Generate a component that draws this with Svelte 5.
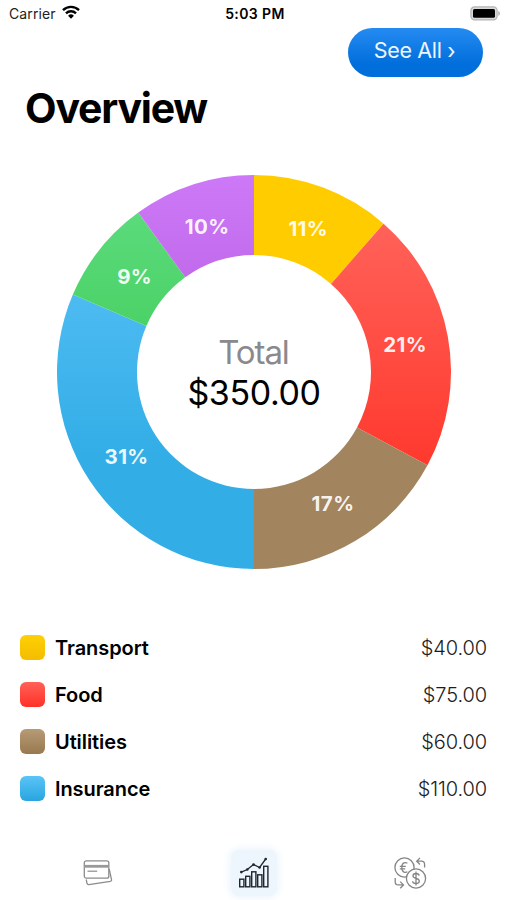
<script>
	const categories = [
		{ name: "Transport", amount: 40, from: "#ffcc00", to: "#ffcc00", top: "#ffd005", bottom: "#f3bd00" },
		{ name: "Food", amount: 75, from: "#ff6259", to: "#ff392e", top: "#ff6259", bottom: "#ff3126" },
		{ name: "Utilities", amount: 60, from: "#a2845e", to: "#a2845e", top: "#b79b77", bottom: "#98794f" },
		{ name: "Insurance", amount: 110, from: "#4dbbf2", to: "#32ade6", top: "#5ac4f7", bottom: "#29a5df" },
		{ name: "Health", amount: 30, from: "#5bdb7c", to: "#4bd267" },
		{ name: "Other", amount: 35, from: "#cd79f7", to: "#c16bec" },
	];

	const outer = 197;
	const inner = 117;
	const labelRadius = 153.2;
	const total = categories.reduce((sum, c) => sum + c.amount, 0);

	function point(radius, share) {
		const angle = share * Math.PI * 2;
		return [radius * Math.sin(angle), -radius * Math.cos(angle)];
	}

	function buildSlices(data) {
		let used = 0;
		return data.map((category) => {
			const start = used / total;
			used += category.amount;
			const end = used / total;
			const [labelX, labelY] = point(labelRadius, (start + end) / 2);
			return {
				...category,
				path: `M${point(outer, start)} A${outer},${outer} 0 0 1 ${point(outer, end)} L${point(inner, end)} A${inner},${inner} 0 0 0 ${point(inner, start)} Z`,
				percent: Math.round((category.amount / total) * 100),
				labelX,
				labelY,
			};
		});
	}

	const slices = buildSlices(categories);
	const legend = categories.slice(0, 4);
</script>

<div class="screen">
	<div class="status">
		<div class="carrier">
			<span>Carrier</span>
			<svg width="18" height="14" viewBox="0 0 18 14">
				<g fill="none" stroke="#000" stroke-width="2.4">
					<path d="M1 5.1a11.5 11.5 0 0 1 16 0" />
					<path d="M4 8.3a7.2 7.2 0 0 1 10 0" />
				</g>
				<path d="M9 13.8 6.1 10.8a4.1 4.1 0 0 1 5.8 0z" />
			</svg>
		</div>
		<span class="time">5:03 PM</span>
		<svg class="battery" width="31" height="15" viewBox="0 0 31 15">
			<rect x=".9" y=".9" width="26.2" height="13" rx="3.6" fill="#d9d9d9" stroke="#b4b4b4" stroke-width="1.2" />
			<rect x="3" y="3" width="22" height="8.8" rx="1.5" />
			<path d="M28.3 5v4.8c2-.6 2-4.2 0-4.8z" fill="#a9a9a9" />
		</svg>
	</div>

	<div class="actions">
		<button>See All ›</button>
	</div>

	<h1>Overview</h1>

	<svg class="chart" width="394" height="394" viewBox="-197 -197 394 394">
		<defs>
			{#each slices as slice (slice.name)}
				<linearGradient id={slice.name} x1="0" y1="0" x2="0" y2={slice.name === "Insurance" ? 0.6 : 1}>
					<stop offset="0" stop-color={slice.from} />
					<stop offset="1" stop-color={slice.to} />
				</linearGradient>
			{/each}
		</defs>
		{#each slices as slice (slice.name)}
			<path d={slice.path} fill="url(#{slice.name})" />
		{/each}
		{#each slices as slice (slice.name)}
			<text class="percent" x={slice.labelX + 0.4} y={slice.labelY + 7.5}>{slice.percent}%</text>
		{/each}
		<text class="total" x="-.5" y="-8.5">Total</text>
		<text class="sum" x="0" y="33">${total.toFixed(2)}</text>
	</svg>

	<ul class="legend">
		{#each legend as item (item.name)}
			<li>
				<span class="swatch" style="background: linear-gradient({item.top}, {item.bottom})"></span>
				<span class="name">{item.name}</span>
				<span class="amount">${item.amount.toFixed(2)}</span>
			</li>
		{/each}
	</ul>

	<nav>
		<div class="tab">
			<svg width="30" height="28" viewBox="0 0 30 28" fill="none" stroke="#8c8c8c" stroke-width="1.3">
				<path d="M3.2 20.5 4 24.4q.3 1.4 1.8 1.2l21.5-3.3q1.5-.3 1.2-1.7L26.2 10" />
				<rect x="1.3" y="1.8" width="24.5" height="17.4" rx="2" fill="#fff" />
				<path d="M1.3 7.3h24.5" stroke-width="2.8" stroke="#999" />
				<path d="M4.5 12.2h9.7" stroke-width="1.2" />
			</svg>
		</div>
		<div class="tab">
			<div class="glow">
				<svg width="32" height="32" viewBox="0 0 32 32" fill="none" stroke="#22262b" stroke-width="1.4">
					<rect x="1.7" y="22.2" width="4.2" height="7.6" />
					<rect x="7.7" y="19.3" width="4.2" height="10.5" />
					<rect x="13.7" y="14.8" width="4.2" height="15" />
					<rect x="19.7" y="17.8" width="4.2" height="12" />
					<rect x="25.7" y="9.3" width="4.2" height="20.5" />
					<path d="M3.3 15.1 9.3 12.5 15.5 7.6 21.6 10.5 27.7 2" stroke-width="1.3" />
					<g fill="#22262b" stroke="none">
						<circle cx="3.3" cy="15.1" r="1.3" />
						<circle cx="9.3" cy="12.5" r="1.3" />
						<circle cx="15.5" cy="7.6" r="1.3" />
						<circle cx="21.6" cy="10.5" r="1.3" />
						<circle cx="27.7" cy="2" r="1.3" />
					</g>
				</svg>
			</div>
		</div>
		<div class="tab">
			<svg width="34" height="34" viewBox="0 0 34 34" fill="none" stroke="#858585" stroke-width="1.3">
				<circle cx="11.5" cy="11.5" r="9.6" />
				<circle cx="23" cy="22.5" r="9.6" fill="#fff" />
				<path d="M23.7 5.2h4.7q3.2 0 3.2 3.2v3.2M27 1.9l-3.3 3.3L27 8.5" />
				<path d="M2.2 22v3.7q0 3.2 3.2 3.2h5M7.2 25.6l3.3 3.3-3.3 3.3" />
				<path d="M14.4 7.2Q12.7 6.2 11 6.9 8.8 7.8 8.8 11.5T11 16.1q1.7.7 3.4-.3M6.8 10.3h6M6.8 12.8h5.4" />
				<path d="M26.2 19.6q-.3-2.1-3.2-2.1-3 0-3 2.4c0 3.3 6.3 1.7 6.3 5.1q0 2.5-3.3 2.5-3.2 0-3.4-2.3M23 15.6v13.8" />
			</svg>
		</div>
	</nav>
</div>

<style>
	:global(body) {
		margin: 0;
		background: #fff;
	}

	.screen {
		width: 507px;
		height: 900px;
		overflow: hidden;
		display: flex;
		flex-direction: column;
		background: #fff;
		color: #000;
		font-family: Inter, "Liberation Sans", sans-serif;
	}

	.screen > * {
		flex: none;
	}

	.status {
		height: 28px;
		padding: 0 6px 2px 9px;
		display: grid;
		grid-template-columns: 1fr auto 1fr;
		align-items: center;
		box-sizing: border-box;
		font-size: 14px;
	}

	.carrier {
		display: flex;
		align-items: center;
		gap: 6px;
		color: #222;
		letter-spacing: 0.1px;
	}

	.carrier svg {
		margin-top: -2px;
	}

	.time {
		font-weight: 600;
		letter-spacing: 0.4px;
	}

	.battery {
		justify-self: end;
	}

	.actions {
		display: flex;
		justify-content: flex-end;
		padding-right: 24px;
	}

	button {
		width: 135px;
		height: 49px;
		padding: 0 2px 6px 0;
		border: 0;
		border-radius: 25px;
		background: linear-gradient(#258bf2, #006edb 75%);
		color: #eef6ff;
		font-family: inherit;
		font-size: 21.5px;
		letter-spacing: -0.35px;
	}

	h1 {
		margin: 6px 0 0 25px;
		height: 50px;
		line-height: 50px;
		font-size: 41px;
		font-weight: 700;
		letter-spacing: -1.2px;
	}

	.chart {
		align-self: center;
		margin: 41.5px 0 0 1px;
	}

	.chart text {
		text-anchor: middle;
	}

	.percent {
		fill: #fff;
		fill-opacity: 0.93;
		font-size: 20.5px;
		font-weight: 700;
		letter-spacing: 0.4px;
	}

	.total {
		fill: #8a8a8e;
		font-size: 33px;
		letter-spacing: -1.1px;
	}

	.sum {
		font-size: 34px;
		letter-spacing: -0.4px;
	}

	.legend {
		list-style: none;
		margin: 56px 20px 0 20px;
		padding: 0;
	}

	.legend li {
		display: flex;
		align-items: center;
		height: 46.9px;
	}

	.swatch {
		width: 25px;
		height: 25px;
		border-radius: 6px;
	}

	.name {
		margin-left: 10px;
		font-size: 20px;
		font-weight: 600;
		letter-spacing: -0.08px;
	}

	.amount {
		margin-left: auto;
		font-size: 20px;
		font-weight: 300;
		letter-spacing: -0.1px;
		color: #1c1c1c;
	}

	nav {
		margin-top: 31.5px;
		padding: 0 19px 0 20px;
		display: flex;
		justify-content: space-around;
	}

	.tab {
		width: 156px;
		height: 58px;
		display: flex;
		align-items: center;
		justify-content: center;
	}

	.glow {
		width: 46px;
		height: 46px;
		display: flex;
		align-items: center;
		justify-content: center;
		border-radius: 8px;
		background: #edf5fd;
		box-shadow: 0 0 8px 2px #edf5fd;
	}
</style>
